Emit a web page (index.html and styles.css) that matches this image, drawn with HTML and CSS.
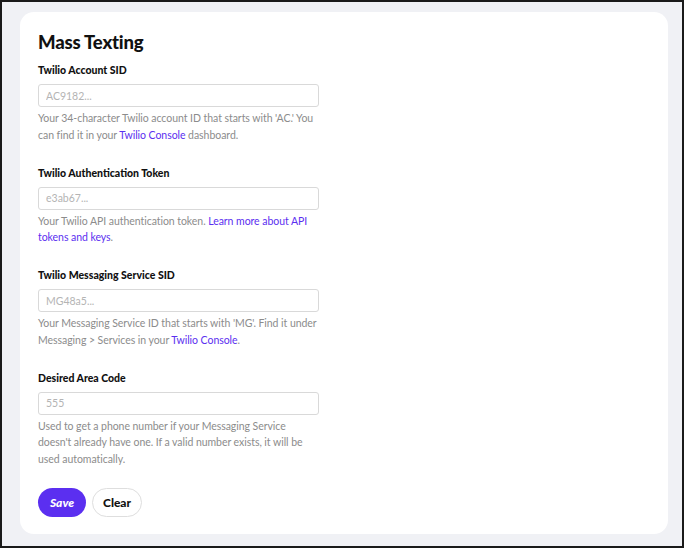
FILE: index.html
```html
<!DOCTYPE html>
<html>
<head>
<meta charset="utf-8">
<link rel="stylesheet" href="styles.css">
</head>
<body>
<div class="frame">
  <div class="card">
    <h1 class="title">Mass Texting</h1>
    <div class="field">
      <label class="label">Twilio Account SID</label>
      <input class="input" placeholder="AC9182...">
      <p class="help">Your 34-character Twilio account ID that starts with 'AC.' You can find it in your <a class="link">Twilio Console</a> dashboard.</p>
    </div>
    <div class="field">
      <label class="label">Twilio Authentication Token</label>
      <input class="input" placeholder="e3ab67...">
      <p class="help">Your Twilio API authentication token. <a class="link">Learn more about API tokens and keys</a>.</p>
    </div>
    <div class="field">
      <label class="label">Twilio Messaging Service SID</label>
      <input class="input" placeholder="MG48a5...">
      <p class="help">Your Messaging Service ID that starts with 'MG'. Find it under Messaging &gt; Services in your <a class="link">Twilio Console</a>.</p>
    </div>
    <div class="field">
      <label class="label">Desired Area Code</label>
      <input class="input" placeholder="555">
      <p class="help">Used to get a phone number if your Messaging Service doesn't already have one. If a valid number exists, it will be used automatically.</p>
    </div>
    <div class="actions">
      <button class="btn btn-primary">Save</button>
      <button class="btn btn-secondary">Clear</button>
    </div>
  </div>
</div>
</body>
</html>
```

FILE: styles.css
```css
* { box-sizing: border-box; }
html, body { margin: 0; padding: 0; }
body { font-family: Lato, "Open Sans", sans-serif; }
.frame {
  width: 684px;
  height: 548px;
  border: 2px solid #1a1a1a;
  background: #f0f1f5;
  padding: 10px 14px 12px 18px;
}
.card {
  background: #fff;
  border-radius: 14px;
  height: 100%;
  padding: 19px 18px 0 18px;
}
.title {
  margin: 0 0 10px 0;
  font-size: 18.5px;
  font-weight: 900;
  line-height: 22px;
  letter-spacing: -0.2px;
  color: #111;
}
.field {
  width: 281px;
  margin-bottom: 22.5px;
  display: flex;
  flex-direction: column;
}
.label {
  font-size: 10.5px;
  font-weight: 900;
  line-height: 14px;
  color: #111;
  margin-bottom: 7px;
}
.input {
  height: 23px;
  border: 1px solid #d9d9d9;
  border-radius: 3px;
  padding: 0 7px;
  font-family: inherit;
  font-size: 10.5px;
  outline: none;
}
.input::placeholder { color: #b4b4b4; }
.help {
  margin: 3px 0 0 0;
  font-size: 10.5px;
  line-height: 16.5px;
  letter-spacing: -0.05px;
  color: #8c8c8c;
}
.link { color: #5b2ff0; }
.actions {
  display: flex;
  gap: 6px;
  margin-top: -2px;
}
.btn {
  height: 29px;
  border-radius: 15px;
  font-family: inherit;
  font-size: 12px;
  font-weight: 900;
  padding: 0;
}
.btn-primary {
  background: #5b2ff0;
  color: #fff;
  border: none;
  font-style: italic;
  width: 48px;
}
.btn-secondary {
  background: #fff;
  color: #111;
  border: 1px solid #dedede;
  width: 50px;
}
```
